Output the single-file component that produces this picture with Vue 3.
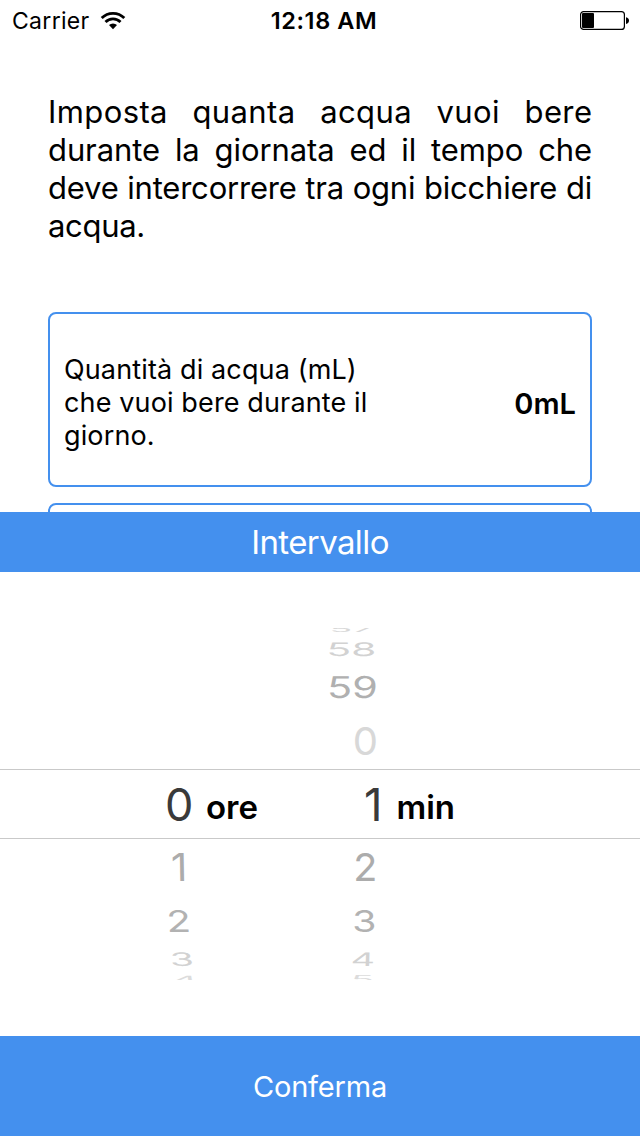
<script setup>
// Each wheel row: label, right edge x, baseline y, horizontal scale, vertical scale, skew, tone
const hours = [
  { t: '0', x: 193.5, y: 249, sx: 0.99, sy: 1, k: 0, c: '#3a3a3a' },
  { t: '1', x: 187.5, y: 309, sx: 0.88, sy: 0.85, k: 1, c: '#acacac' },
  { t: '2', x: 191.5, y: 360, sx: 0.88, sy: 0.66, k: 3, c: '#b2b2b2' },
  { t: '3', x: 194.5, y: 393.5, sx: 0.85, sy: 0.41, k: 5, c: '#d2d2d2' },
  { t: '4', x: 198.5, y: 411, sx: 0.87, sy: 0.22, k: 10, c: '#dcdcdc' }
]
const minutes = [
  { t: '57', x: 373, y: 60, sx: 0.82, sy: 0.18, k: -10, c: '#d8d8d8' },
  { t: '58', x: 376, y: 83.5, sx: 0.89, sy: 0.41, k: -3, c: '#d2d2d2' },
  { t: '59', x: 377.5, y: 126, sx: 0.91, sy: 0.66, k: -2, c: '#b0b0b0' },
  { t: '0', x: 378, y: 183, sx: 0.88, sy: 0.85, k: 0, c: '#d8d8d8' },
  { t: '1', x: 382.5, y: 249, sx: 1, sy: 1, k: 0, c: '#3a3a3a' },
  { t: '2', x: 377.5, y: 309, sx: 0.87, sy: 0.85, k: 0, c: '#acacac' },
  { t: '3', x: 376.5, y: 360, sx: 0.86, sy: 0.66, k: 0, c: '#b2b2b2' },
  { t: '4', x: 375, y: 393.5, sx: 0.83, sy: 0.41, k: -2, c: '#d2d2d2' },
  { t: '5', x: 374, y: 411, sx: 0.83, sy: 0.22, k: 0, c: '#dcdcdc' }
]
const rows = [...hours, ...minutes]
const place = (r) => `translate(${r.x} ${r.y}) skewX(${r.k}) scale(${r.sx} ${r.sy})`
</script>

<template>
  <div class="screen">
    <header class="status">
      <div class="carrier">
        <span class="carrier-name">Carrier</span>
        <svg class="wifi" width="26" height="20" viewBox="0 0 26 20">
          <g fill="none" stroke="#000" stroke-width="2.8">
            <path d="M1.7 7.1A15.9 15.9 0 0 1 24.3 7.1" />
            <path d="M5.5 11A10.5 10.5 0 0 1 20.5 11" />
          </g>
          <path d="M9 14.1A5.8 5.8 0 0 1 17 14.1L13 18.3Z" />
        </svg>
      </div>
      <div class="time">12:18 AM</div>
      <svg class="battery" width="50" height="20" viewBox="0 0 50 20">
        <rect x="0.6" y="0.6" width="43.8" height="17.8" rx="3" fill="none" stroke="#000" stroke-width="1.2" />
        <rect x="2" y="2" width="12" height="15" rx="1" />
        <path d="M46 6.2Q49 7 49 9.6T46 13Z" />
      </svg>
    </header>

    <main class="content">
      <p class="intro">
        <span class="line wide">Imposta quanta acqua vuoi bere</span>
        <span class="line">durante la giornata ed il tempo che</span>
        <span class="line tight">deve intercorrere tra ogni bicchiere di</span>
        <span class="line last">acqua.</span>
      </p>
      <section class="card">
        <div class="label">Quantità di acqua (mL)<br />che vuoi bere durante il<br />giorno.</div>
        <div class="value">0mL</div>
      </section>
      <section class="card next"></section>
    </main>

    <section class="sheet">
      <h2 class="title"><span>Intervallo</span></h2>
      <svg class="wheel" width="640" height="464" viewBox="0 0 640 464">
        <defs>
          <clipPath id="drum"><rect x="0" y="56" width="640" height="352" /></clipPath>
        </defs>
        <g clip-path="url(#drum)">
          <text v-for="(r, i) in rows" :key="i" class="digit" :transform="place(r)" :fill="r.c">{{ r.t }}</text>
        </g>
        <path d="M0 197.5H640M0 266.5H640" stroke="#c9c9c9" stroke-width="1" />
        <text class="unit" x="206" y="247">ore</text>
        <text class="unit" x="396.5" y="247">min</text>
      </svg>
      <button class="confirm"><span>Conferma</span></button>
    </section>
  </div>
</template>

<style>
body {
  background: #fff;
}
</style>

<style scoped>
.screen {
  width: 640px;
  height: 1136px;
  overflow: hidden;
  display: flex;
  flex-direction: column;
  background: #fff;
  color: #000;
  font-family: Inter, "Liberation Sans", sans-serif;
}
.status {
  height: 40px;
  box-sizing: border-box;
  flex: none;
  display: grid;
  grid-template-columns: 1fr auto 1fr;
  align-items: center;
  padding: 2px 10px 0 12px;
  font-size: 23px;
}
.carrier {
  display: flex;
  align-items: center;
  gap: 10px;
  line-height: 38px;
  letter-spacing: 0.3px;
}
.wifi {
  margin-bottom: 1px;
}
.time {
  font-size: 23.5px;
  font-weight: 600;
  letter-spacing: 0.6px;
  line-height: 38px;
  padding-left: 6px;
}
.battery {
  justify-self: end;
}
.content {
  height: 472px;
  flex: none;
  overflow: hidden;
  box-sizing: border-box;
  padding: 53px 48px 0;
}
.intro {
  margin: 0 0 67px;
  height: 152px;
  font-size: 31px;
  line-height: 38px;
}
.line {
  display: block;
  height: 38px;
  text-align: justify;
  text-align-last: justify;
  word-spacing: -2px;
  letter-spacing: -0.1px;
}
.wide {
  letter-spacing: 0.4px;
  margin-right: -0.4px;
}
.tight {
  letter-spacing: -0.2px;
}
.last {
  text-align-last: left;
  letter-spacing: -0.3px;
}
.card {
  box-sizing: border-box;
  height: 175px;
  border: 2px solid #4490ee;
  border-radius: 8px;
  display: flex;
  align-items: center;
  justify-content: space-between;
  padding: 6px 14px 0 14px;
}
.next {
  margin-top: 16px;
}
.label {
  font-size: 27px;
  line-height: 33px;
  white-space: nowrap;
  letter-spacing: 0.13px;
}
.value {
  font-size: 29px;
  font-weight: 600;
  padding-top: 2px;
}
.sheet {
  flex: none;
  display: flex;
  flex-direction: column;
  background: #fff;
}
.title {
  margin: 0;
  height: 60px;
  line-height: 60px;
  text-align: center;
  background: #4490ee;
  color: #fff;
  font-size: 33px;
  font-weight: 400;
  letter-spacing: -0.6px;
}
.wheel {
  display: block;
}
.digit {
  font-size: 45.5px;
  font-weight: 400;
  text-anchor: end;
}
.unit {
  font-size: 33px;
  font-weight: 600;
}
.confirm {
  height: 100px;
  border: 0;
  padding: 0;
  background: #4490ee;
  color: #fff;
  font: 400 29px Inter, "Liberation Sans", sans-serif;
  letter-spacing: -0.2px;
}
</style>
